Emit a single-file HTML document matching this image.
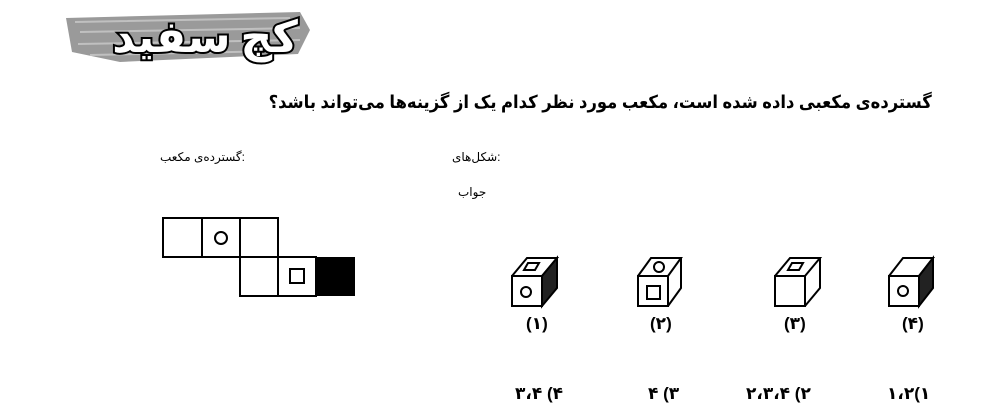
<!DOCTYPE html>
<html><head><meta charset="utf-8"><style>
body{margin:0;width:992px;height:415px;background:#fff;position:relative;overflow:hidden;font-family:"Liberation Sans","DejaVu Sans",sans-serif;color:#000}
.t{position:absolute;white-space:nowrap;direction:rtl;font-weight:bold}
</style></head><body>
<svg style="position:absolute;left:0;top:0" width="992" height="415">
<path d="M66 18 L300 12 L310 30 L298 54 L120 62 L72 52 Z" fill="#9a9a9a"/>
<path d="M75 22 L290 18 M80 32 L300 28 M78 44 L300 40 M90 55 L280 51" stroke="#c0c0c0" stroke-width="2"/>
<text x="205" y="52" text-anchor="middle" font-family="Noto Sans CJK SC, DejaVu Sans, sans-serif" font-size="44" font-weight="bold" fill="#fff" stroke="#000" stroke-width="4" paint-order="stroke" direction="rtl">کچ سفید</text>
<g fill="none" stroke="#000" stroke-width="2">
<rect x="163" y="218" width="39" height="39"/><rect x="202" y="218" width="38" height="39"/><rect x="240" y="218" width="38" height="39"/>
<rect x="240" y="257" width="38" height="39"/><rect x="278" y="257" width="38" height="39"/>
<circle cx="221" cy="238" r="6"/><rect x="290" y="269" width="14" height="14"/>
</g>
<rect x="316" y="257" width="39" height="39" fill="#000"/>
<g stroke="#000" stroke-width="2" fill="none">
<g transform="translate(512,276)"><rect width="30" height="30"/><path d="M0 0 L15 -18 L45 -18 L30 0"/><path d="M30 0 L45 -18 L45 12 L30 30Z" fill="#222"/><path d="M16 -13 L27 -13 L23 -6 L12 -6Z"/><circle cx="14" cy="16" r="5"/></g>
<g transform="translate(638,276)"><rect width="30" height="30"/><path d="M0 0 L13 -18 L43 -18 L30 0 M30 30 L43 12 L43 -18"/><circle cx="21" cy="-9" r="5"/><rect x="9" y="10" width="13" height="13"/></g>
<g transform="translate(775,276)"><rect width="30" height="30"/><path d="M0 0 L15 -18 L45 -18 L30 0 M30 30 L45 12 L45 -18"/><path d="M17 -13 L28 -13 L24 -6 L13 -6Z"/></g>
<g transform="translate(889,276)"><rect width="30" height="30"/><path d="M0 0 L14 -18 L44 -18 L30 0"/><path d="M30 0 L44 -18 L44 12 L30 30Z" fill="#222"/><circle cx="14" cy="15" r="5"/></g>
</g>
</svg>
<div class="t" style="right:60px;top:92px;font-size:18px;transform:scaleX(0.91);transform-origin:right center">گسترده‌ی مکعبی داده شده است، مکعب مورد نظر کدام یک از گزینه‌ها می‌تواند باشد؟</div>
<div class="t" style="left:160px;top:150px;font-size:12px;font-weight:normal">:گسترده‌ی مکعب</div>
<div class="t" style="left:452px;top:150px;font-size:12px;font-weight:normal">:شکل‌های</div>
<div class="t" style="left:458px;top:185px;font-size:12px;font-weight:normal">جواب</div>
<div class="t" style="left:526px;top:314px;font-size:17px">(۱)</div>
<div class="t" style="left:650px;top:314px;font-size:17px">(۲)</div>
<div class="t" style="left:784px;top:314px;font-size:17px">(۳)</div>
<div class="t" style="left:902px;top:314px;font-size:17px">(۴)</div>
<div class="t" style="left:515px;top:384px;font-size:17px">۴) ۳،۴</div>
<div class="t" style="left:648px;top:384px;font-size:17px">۳) ۴</div>
<div class="t" style="left:746px;top:384px;font-size:17px">۲) ۲،۳،۴</div>
<div class="t" style="left:887px;top:384px;font-size:17px">۱)۱،۲</div>
</body></html>
